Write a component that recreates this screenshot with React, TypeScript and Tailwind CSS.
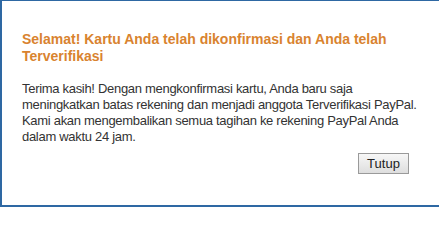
export default function App() {
  return (
    <div className="w-[439px] h-[207px] bg-white border-t border-l-2 border-b-2 border-[#2e68a3] font-['Liberation_Sans',Arial,sans-serif]">
      <div className="pl-[20px] pr-[18px] pt-[30px]">
        <h1 className="pr-[12px] text-[14px] leading-[17px] font-bold text-[#d9832f]">
          Selamat! Kartu Anda telah dikonfirmasi dan Anda telah Terverifikasi
        </h1>
        <p className="mt-[16px] text-[13px] leading-[16px] tracking-[-0.3px] text-[#333333]">
          Terima kasih! Dengan mengkonfirmasi kartu, Anda baru saja meningkatkan batas rekening dan menjadi anggota Terverifikasi PayPal. Kami akan mengembalikan semua tagihan ke rekening PayPal Anda dalam waktu 24 jam.
        </p>
        <div className="flex justify-end mt-[8px] pr-[12px]">
          <button className="h-[21px] w-[51px] text-[13px] leading-[19px] text-[#222] border border-[#9a9a9a] bg-gradient-to-b from-[#f7f7f7] to-[#dedede]">
            Tutup
          </button>
        </div>
      </div>
    </div>
  )
}
